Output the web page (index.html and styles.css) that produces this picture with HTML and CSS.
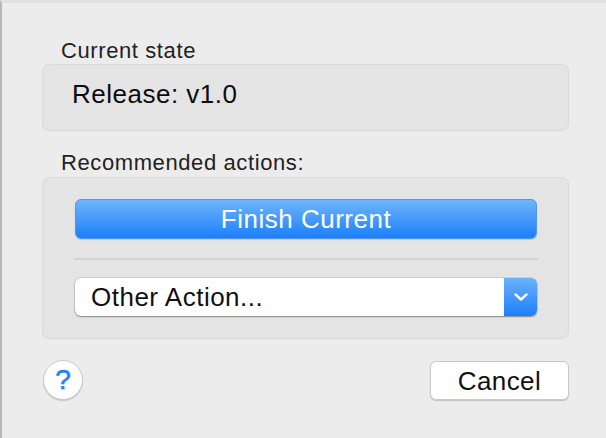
FILE: index.html
```html
<!DOCTYPE html>
<html>
<head>
<meta charset="utf-8">
<link rel="stylesheet" href="styles.css">
</head>
<body>
<div class="window">
  <div class="label first">Current state</div>
  <div class="group state">
    <div class="state-text">Release: v1.0</div>
  </div>
  <div class="label second">Recommended actions:</div>
  <div class="group actions">
    <button class="primary">Finish Current</button>
    <div class="separator"></div>
    <div class="popup">
      <span class="popup-text">Other Action...</span>
      <span class="popup-arrow">
        <svg width="16" height="10" viewBox="0 0 16 10"><path d="M2.5 2.5 L8 7.5 L13.5 2.5" fill="none" stroke="#fff" stroke-width="2.4" stroke-linecap="round" stroke-linejoin="round"/></svg>
      </span>
    </div>
  </div>
  <div class="footer">
    <div class="help">?</div>
    <button class="cancel">Cancel</button>
  </div>
</div>
</body>
</html>
```

FILE: styles.css
```css
html, body {
  margin: 0;
  padding: 0;
  background: #ececec;
}
.window {
  width: 606px;
  height: 438px;
  box-sizing: border-box;
  background: #ececec;
  border-left: 2px solid #b7b7b7;
  border-top: 3px solid #e1e1e1;
  padding: 0 37px 0 40px;
  font-family: "Liberation Sans", Arial, sans-serif;
  color: #111;
}
.label {
  font-size: 22px;
  line-height: 26px;
  letter-spacing: 0.6px;
  color: #222;
  padding-left: 19px;
}
.label.first {
  margin-top: 35px;
}
.label.second {
  margin-top: 19px;
  margin-bottom: 1px;
}
.group {
  background: #e4e4e4;
  border: 1px solid #dadada;
  border-radius: 7px;
  box-sizing: border-box;
}
.state {
  height: 67px;
  padding: 14px 0 0 29px;
}
.state-text {
  font-size: 26px;
  line-height: 30px;
  letter-spacing: 0.5px;
  color: #0c0c0c;
}
.actions {
  height: 162px;
  padding: 21px 31px 0 32px;
  display: flex;
  flex-direction: column;
}
.primary {
  display: block;
  width: 100%;
  height: 40px;
  margin: 0;
  border: 1px solid #4e97ec;
  border-radius: 6px;
  background: linear-gradient(#6fb5fa, #1c7ffa);
  color: #fff;
  font-family: "Liberation Sans", Arial, sans-serif;
  font-size: 26px;
  letter-spacing: 0.5px;
  line-height: 36px;
  padding: 0;
  box-shadow: 0 1px 1px rgba(0,0,0,0.12);
}
.separator {
  height: 2px;
  background: #d2d2d2;
  margin: 19px -1px 18px -1px;
}
.popup {
  height: 38px;
  display: flex;
  background: #fff;
  border-radius: 6px;
  box-shadow: 0 0 0 0.5px rgba(0,0,0,0.18), 0 1px 1.5px rgba(0,0,0,0.35);
  overflow: hidden;
}
.popup-text {
  flex: 1;
  font-size: 26px;
  line-height: 38px;
  letter-spacing: 0.5px;
  padding-left: 16px;
  color: #111;
}
.popup-arrow {
  width: 33px;
  background: linear-gradient(#6ab2fa, #1c7ffa);
  display: flex;
  align-items: center;
  justify-content: center;
}
.footer {
  display: flex;
  align-items: center;
  justify-content: space-between;
  margin-top: 20px;
  padding-left: 1px;
}
.help {
  width: 38px;
  height: 38px;
  border-radius: 50%;
  background: #fff;
  border: 1px solid #c9c9c9;
  box-shadow: 0 1px 1px rgba(0,0,0,0.15);
  color: #1f83f7;
  font-size: 28px;
  -webkit-text-stroke: 0.6px #1f83f7;
  line-height: 38px;
  text-align: center;
}
.cancel {
  width: 139px;
  height: 39px;
  margin: 2px 0 0 0;
  padding: 0;
  background: #fff;
  border: 1px solid #cacaca;
  border-radius: 6px;
  box-shadow: 0 1px 1px rgba(0,0,0,0.18);
  font-family: "Liberation Sans", Arial, sans-serif;
  font-size: 26px;
  letter-spacing: 0.4px;
  color: #111;
  line-height: 36px;
}
```
